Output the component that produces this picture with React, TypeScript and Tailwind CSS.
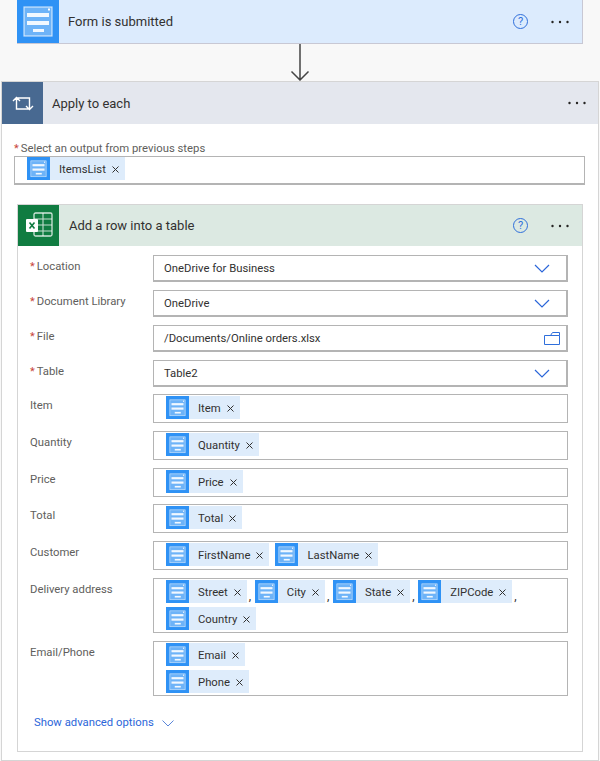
import { ReactNode } from 'react';

const FormIcon = ({ size }: { size: number }) => (
  <svg width={size} height={size} viewBox="0 0 42 42" className="shrink-0 block">
    <rect x="7" y="7" width="28" height="29" fill="#ffffff" fillOpacity="0.3" stroke="#ffffff" strokeOpacity="0.7" strokeWidth="1.2" />
    <rect x="10" y="13" width="22" height="4" fill="#ffffff" fillOpacity="0.9" />
    <rect x="10" y="21" width="22" height="4" fill="#ffffff" fillOpacity="0.9" />
    <rect x="16" y="29" width="11" height="3" fill="#ffffff" fillOpacity="0.9" />
    <rect x="31" y="8.5" width="2" height="2" fill="#ffffff" />
  </svg>
);

const ExcelIcon = () => (
  <svg width="42" height="42" viewBox="0 0 42 42" className="block">
    <rect x="16" y="8" width="18" height="23" rx="1.5" fill="none" stroke="#ffffff" strokeOpacity="0.8" strokeWidth="1.3" />
    <path d="M25 8V31M16 14H34M16 20H34M16 26H34" stroke="#ffffff" strokeOpacity="0.75" strokeWidth="1.1" />
    <rect x="8" y="14" width="12" height="13" rx="1" fill="#ffffff" />
    <path d="M11.5 17.5L16.5 23.5M16.5 17.5L11.5 23.5" stroke="#107c41" strokeWidth="1.6" />
  </svg>
);

const LoopIcon = () => (
  <svg width="22" height="15" viewBox="0 0 22 15" fill="none" stroke="#ffffff" strokeWidth="1.4">
    <path d="M1 5L4.5 1.5L8 5M4.5 2V13H17M14 10L17.5 13.5L21 10M17.5 13V2H5" />
  </svg>
);

const HelpIcon = () => (
  <span className="w-[15px] h-[15px] rounded-full border border-[#2f6fdb] text-[#2f6fdb] text-[11px] leading-none flex items-center justify-center">?</span>
);

const Dots = () => (
  <svg width="18" height="4" viewBox="0 0 18 4" className="block">
    <circle cx="1.5" cy="2" r="1.2" fill="#252423" />
    <circle cx="9" cy="2" r="1.2" fill="#252423" />
    <circle cx="16.5" cy="2" r="1.2" fill="#252423" />
  </svg>
);

const Chevron = () => (
  <svg width="16" height="9" viewBox="0 0 16 9" fill="none" stroke="#2b66d9" strokeWidth="1.2" className="block">
    <path d="M1 1L8 8L15 1" />
  </svg>
);

const FolderIcon = () => (
  <svg width="16" height="13" viewBox="0 0 16 13" fill="none" stroke="#2f6fdb" strokeWidth="1" className="block -mr-[10px]">
    <path d="M0.5 3.5H15.5V12.5H0.5ZM6.5 3.5L8.5 0.5H15.5V3.5" />
  </svg>
);

const Chip = ({ label }: { label: string }) => (
  <span className="inline-flex items-center h-[23px] bg-[#deecfb]">
    <span className="w-[23px] h-[23px] bg-[#2f92f5] shrink-0">
      <FormIcon size={23} />
    </span>
    <span className="pl-[9px] pt-[4px] text-[11.3px] text-[#323130]">{label}</span>
    <svg width="7" height="7" viewBox="0 0 7 7" stroke="#323130" strokeWidth="1" className="ml-[6px] mr-[6px] mt-[2px]">
      <path d="M0.5 0.5L6.5 6.5M6.5 0.5L0.5 6.5" />
    </svg>
  </span>
);

const Comma = () => <span className="text-[12px] text-[#323130] self-end leading-[14px] mx-[2px] w-[4px]">,</span>;

const Star = () => <span className="text-[#c8453b] text-[11px] leading-none mr-[2px]">*</span>;

const Row = ({ label, required, tight, children }: { label: string; required?: boolean; tight?: boolean; children: ReactNode }) => (
  <div className={`flex ${tight ? 'mb-[7px]' : 'mb-[8px]'}`}>
    <div className="w-[123px] pt-[4px] text-[11.3px] leading-[16px] text-[#605e5c] shrink-0">
      {required && <Star />}
      {label}
    </div>
    <div className="w-[415px]">{children}</div>
  </div>
);

const TextBox = ({ value, icon }: { value: string; icon: ReactNode }) => (
  <div className="h-[27px] border border-[#b4b4b4] border-b-2 border-r-2 bg-white flex items-center justify-between pl-[10px] pr-[16px] text-[11.3px] text-[#323130]">
    <span className="pt-[3px]">{value}</span>
    {icon}
  </div>
);

const ChipBox = ({ children, col }: { children: ReactNode; col?: boolean }) => (
  <div className={`border border-[#b4b4b4] bg-white pl-[12px] pt-[1px] pb-[2px] min-h-[29px] flex flex-wrap gap-y-[4px] ${col ? 'flex-col items-start' : 'items-start'}`}>
    {children}
  </div>
);

const App = () => {
  return (
    <div className="w-[600px] h-[761px] overflow-hidden bg-[#f8f8f8] font-['Roboto',sans-serif]">
      {/* Trigger card */}
      <div className="ml-[17px] w-[566px] h-[44px] bg-[#dcebfd] border-b border-r border-[#c8c8d4] flex items-center">
        <div className="w-[42px] h-[43px] bg-[#2f92f5] shrink-0">
          <FormIcon size={42} />
        </div>
        <div className="ml-[9px] flex-1 text-[13px] text-[#323130] pt-[1px]">Form is submitted</div>
        <HelpIcon />
        <div className="ml-[23px] mr-[13px]"><Dots /></div>
      </div>

      {/* Arrow */}
      <div className="h-[37px] flex justify-center">
        <svg width="20" height="37" viewBox="0 0 20 37" fill="none" stroke="#444444" strokeWidth="1.5" className="block -ml-[1px]">
          <path d="M10 0V36M1.5 27.5L10 36L18.5 27.5" />
        </svg>
      </div>

      {/* Apply to each */}
      <div className="ml-[1px] w-[598px] h-[680px] bg-white border border-[#d5d5d5]">
        <div className="h-[42px] bg-[#e4e7ee] flex items-center">
          <div className="w-[41px] h-[42px] bg-[#486991] flex items-center justify-center shrink-0">
            <LoopIcon />
          </div>
          <div className="ml-[9px] flex-1 text-[13px] text-[#323130] pt-[1px]">Apply to each</div>
          <div className="mr-[12px]"><Dots /></div>
        </div>

        <div className="pl-[12px] pt-[17px]">
          <div className="text-[11.3px] leading-[16px] text-[#605e5c] -mb-[1px]">
            <Star />Select an output from previous steps
          </div>
          <div className="w-[571px] h-[29px] border border-[#b4b4b4] border-b-2 pl-[12px]">
            <Chip label="ItemsList" />
          </div>
        </div>

        {/* Excel action */}
        <div className="ml-[15px] mt-[19px] w-[566px] h-[548px] border border-[#d5d5d5]">
          <div className="h-[41px] bg-[#dce9e2] flex items-center">
            <div className="w-[41px] h-[41px] bg-[#107c41] shrink-0">
              <ExcelIcon />
            </div>
            <div className="ml-[10px] flex-1 text-[13px] text-[#323130] pt-[1px]">Add a row into a table</div>
            <HelpIcon />
            <div className="ml-[23px] mr-[13px]"><Dots /></div>
          </div>

          <div className="pl-[12px] pt-[9px]">
            <Row label="Location" required>
              <TextBox value="OneDrive for Business" icon={<Chevron />} />
            </Row>
            <Row label="Document Library" required>
              <TextBox value="OneDrive" icon={<Chevron />} />
            </Row>
            <Row label="File" required>
              <TextBox value="/Documents/Online orders.xlsx" icon={<FolderIcon />} />
            </Row>
            <Row label="Table" required tight>
              <TextBox value="Table2" icon={<Chevron />} />
            </Row>
            <Row label="Item"><ChipBox><Chip label="Item" /></ChipBox></Row>
            <Row label="Quantity"><ChipBox><Chip label="Quantity" /></ChipBox></Row>
            <Row label="Price" tight><ChipBox><Chip label="Price" /></ChipBox></Row>
            <Row label="Total"><ChipBox><Chip label="Total" /></ChipBox></Row>
            <Row label="Customer">
              <ChipBox>
                <Chip label="FirstName" />
                <span className="w-[6px]" />
                <Chip label="LastName" />
              </ChipBox>
            </Row>
            <Row label="Delivery address">
              <ChipBox>
                <Chip label="Street" /><Comma />
                <Chip label="City" /><Comma />
                <Chip label="State" /><Comma />
                <Chip label="ZIPCode" /><Comma />
                <Chip label="Country" />
              </ChipBox>
            </Row>
            <Row label="Email/Phone">
              <ChipBox col>
                <Chip label="Email" />
                <Chip label="Phone" />
              </ChipBox>
            </Row>
            <div className="mt-[19px] pl-[4px] flex items-center gap-[8px] text-[11.3px] text-[#2b66d9]">
              <span>Show advanced options</span>
              <svg width="12" height="7" viewBox="0 0 12 7" fill="none" stroke="#5a86d9" strokeWidth="1" className="block">
                <path d="M0.5 0.5L6 6L11.5 0.5" />
              </svg>
            </div>
          </div>
        </div>
      </div>
    </div>
  );
};

export default App;
